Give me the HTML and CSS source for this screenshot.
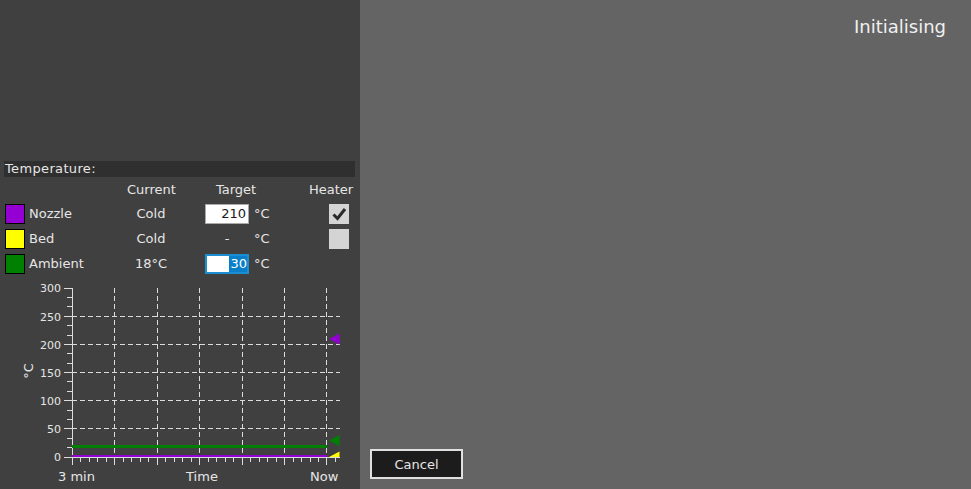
FILE: index.html
```html
<!DOCTYPE html>
<html>
<head>
<meta charset="utf-8">
<link rel="stylesheet" href="styles.css">
</head>
<body>
<div class="app">
  <div class="left">
    <div class="section-title">Temperature:</div>
    <div class="thead">
      <span></span>
      <span class="c">Current</span>
      <span></span>
      <span class="c">Target</span>
      <span></span>
      <span class="r">Heater</span>
    </div>
    <div class="row">
      <span class="swatch violet"></span>
      <span class="name">Nozzle</span>
      <span class="cur">Cold</span>
      <span></span>
      <span class="field">210</span>
      <span class="unit">°C</span>
      <span class="check on"><svg width="20" height="20" viewBox="0 0 20 20"><path d="M4.5 10.5 L8.5 14.5 L16 5" fill="none" stroke="#2a2a2a" stroke-width="3"/></svg></span>
    </div>
    <div class="row">
      <span class="swatch yellow"></span>
      <span class="name">Bed</span>
      <span class="cur">Cold</span>
      <span></span>
      <span class="dash">-</span>
      <span class="unit">°C</span>
      <span class="check"></span>
    </div>
    <div class="row">
      <span class="swatch green"></span>
      <span class="name">Ambient</span>
      <span class="cur">18°C</span>
      <span></span>
      <span class="field focus"><span class="sel">30</span></span>
      <span class="unit">°C</span>
      <span></span>
    </div>
    <svg class="chart" width="360" height="213" viewBox="0 276 360 213">
      <g stroke="#dcdcdc" stroke-width="1" stroke-dasharray="5 3" shape-rendering="crispEdges">
        <line x1="72" y1="316.5" x2="340" y2="316.5"/>
        <line x1="72" y1="344.5" x2="340" y2="344.5"/>
        <line x1="72" y1="372.5" x2="340" y2="372.5"/>
        <line x1="72" y1="400.5" x2="340" y2="400.5"/>
        <line x1="72" y1="428.5" x2="340" y2="428.5"/>
        <line x1="114.5" y1="288" x2="114.5" y2="457"/>
        <line x1="157.5" y1="288" x2="157.5" y2="457"/>
        <line x1="199.5" y1="288" x2="199.5" y2="457"/>
        <line x1="242.5" y1="288" x2="242.5" y2="457"/>
        <line x1="284.5" y1="288" x2="284.5" y2="457"/>
        <line x1="326.5" y1="288" x2="326.5" y2="457"/>
      </g>
      <g stroke="#dcdcdc" stroke-width="1" fill="none" shape-rendering="crispEdges">
        <path d="M72.5 288 V465 M72 457.5 H340"/>
        <path d="M64 288.5 H72 M64 316.5 H72 M64 344.5 H72 M64 372.5 H72 M64 400.5 H72 M64 428.5 H72 M64 457.5 H72"/>
        <path d="M67 297.5 H72 M67 306.5 H72 M67 325.5 H72 M67 335.5 H72 M67 353.5 H72 M67 363.5 H72 M67 381.5 H72 M67 391.5 H72 M67 410.5 H72 M67 419.5 H72 M67 438.5 H72 M67 447.5 H72"/>
        <path d="M114.5 457 V465 M157.5 457 V465 M199.5 457 V465 M242.5 457 V465 M284.5 457 V465 M326.5 457 V465"/>
        <path d="M80.5 457 V462 M89.5 457 V462 M97.5 457 V462 M106.5 457 V462 M123.5 457 V462 M131.5 457 V462 M140.5 457 V462 M148.5 457 V462 M165.5 457 V462 M174.5 457 V462 M182.5 457 V462 M191.5 457 V462 M208.5 457 V462 M216.5 457 V462 M225.5 457 V462 M233.5 457 V462 M250.5 457 V462 M259.5 457 V462 M267.5 457 V462 M276.5 457 V462 M293.5 457 V462 M301.5 457 V462 M310.5 457 V462 M318.5 457 V462 M335.5 457 V462"/>
      </g>
      <rect x="72" y="445" width="255" height="3" fill="#008000"/>
      <rect x="72" y="455" width="255" height="2" fill="#9400d3"/>
      <polygon points="329,339 339.5,333.5 339.5,344.5" fill="#9400d3"/>
      <polygon points="329,440.5 339.5,435 339.5,446" fill="#008000"/>
      <polygon points="329,457 339.5,451.5 339.5,457" fill="#ffff00"/>
      <g class="ylab" text-anchor="end">
        <text x="61" y="292">300</text>
        <text x="61" y="320.5">250</text>
        <text x="61" y="348.5">200</text>
        <text x="61" y="376.5">150</text>
        <text x="61" y="404.5">100</text>
        <text x="61" y="432.5">50</text>
        <text x="61" y="461">0</text>
      </g>
      <g class="xlab">
        <text x="58" y="481">3 min</text>
        <text x="202" y="481" text-anchor="middle">Time</text>
        <text x="310" y="481">Now</text>
        <text x="33" y="371" text-anchor="middle" transform="rotate(-90 33 371)">°C</text>
      </g>
    </svg>
  </div>
  <div class="right">
    <div class="status">Initialising</div>
    <div class="actions">
      <button class="btn">Cancel</button>
    </div>
  </div>
</div>
</body>
</html>
```
FILE: styles.css
```css
html, body {
  margin: 0;
  padding: 0;
}
body {
  font-family: "DejaVu Sans", Verdana, sans-serif;
  font-size: 13px;
  color: #e6e6e6;
  background: #646464;
}
.app {
  display: flex;
  width: 971px;
  height: 489px;
  overflow: hidden;
}
.left {
  width: 360px;
  flex: none;
  background: #404040;
  display: flex;
  flex-direction: column;
  padding-top: 161px;
  box-sizing: border-box;
}
.section-title {
  margin: 0 5px 0 4px;
  height: 16px;
  line-height: 16px;
  padding-left: 1px;
  background: #2f2f2f;
  font-size: 13px;
  letter-spacing: 0.35px;
}
.thead {
  display: grid;
  grid-template-columns: 122px 48px 30px 62px 42px 44px;
  padding-left: 5px;
  padding-top: 2px;
  height: 22px;
  line-height: 22px;
}
.thead .c { text-align: center; }
.thead .r { text-align: right; }
.row {
  display: grid;
  grid-template-columns: 20px 102px 48px 30px 44px 80px 20px;
  padding-left: 5px;
  height: 25px;
  align-items: center;
}
.swatch {
  width: 20px;
  height: 20px;
  box-sizing: border-box;
  border: 1px solid #000;
}
.violet { background: #9400d3; }
.yellow { background: #ffff00; }
.green { background: #008000; }
.name { padding-left: 4px; }
.cur { text-align: center; }
.field {
  height: 20px;
  box-sizing: border-box;
  background: #fff;
  border: 1px solid #a9a9a9;
  color: #1a1a1a;
  text-align: right;
  padding-right: 2px;
  line-height: 18px;
}
.field.focus {
  border: 2px solid #1a8fd1;
  padding-right: 0;
  line-height: 16px;
}
.sel {
  background: #0a7fc9;
  color: #fff;
  display: inline-block;
  height: 16px;
  padding: 0 0 0 1px;
  vertical-align: top;
}
.dash { text-align: center; }
.unit { padding-left: 5px; }
.check {
  width: 20px;
  height: 20px;
  background: #d4d4d4;
  display: block;
}
.check svg { display: block; }
.chart { display: block; }
.ylab { font-size: 11px; fill: #e6e6e6; }
.xlab { font-size: 13px; fill: #e6e6e6; }
.right {
  flex: 1;
  display: flex;
  flex-direction: column;
  justify-content: space-between;
  padding: 16px 25px 10px 10px;
}
.status {
  align-self: flex-end;
  font-size: 18px;
  color: #f0f0f0;
  line-height: 22px;
}
.actions { display: flex; }
.btn {
  width: 93px;
  height: 30px;
  background: #1c1c1c;
  border: 2px solid #e0e0e0;
  color: #e6e6e6;
  font-family: "DejaVu Sans", Verdana, sans-serif;
  font-size: 13px;
  padding: 0;
}
```
